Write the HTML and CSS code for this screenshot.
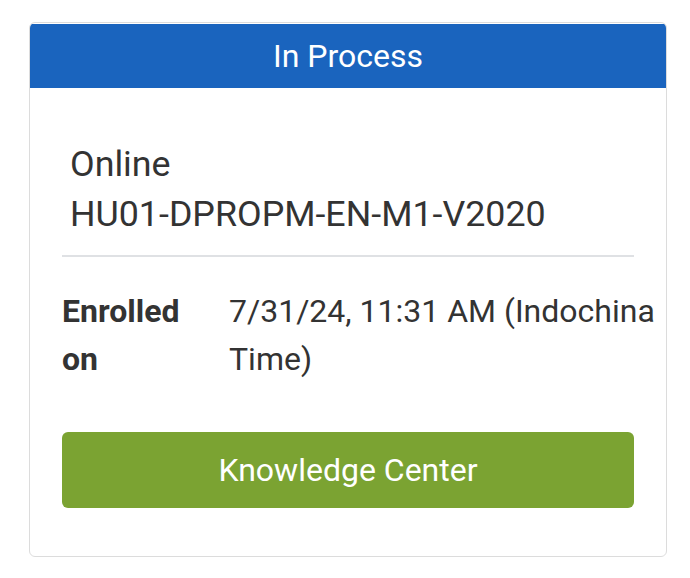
FILE: index.html
```html
<!DOCTYPE html>
<html lang="en">
<head>
<meta charset="utf-8">
<link rel="stylesheet" href="styles.css">
<title>In Process</title>
</head>
<body>
<div class="card">
  <div class="card-header">In Process</div>
  <div class="card-body">
    <div class="course-name">Online<br>HU01-DPROPM-EN-M1-V2020</div>
    <div class="divider"></div>
    <div class="details">
      <div class="label">Enrolled on</div>
      <div class="value">7/31/24, 11:31 AM (Indochina Time)</div>
    </div>
    <a class="btn" href="#">Knowledge Center</a>
  </div>
</div>
</body>
</html>
```

FILE: styles.css
```css
html, body {
  margin: 0;
  padding: 0;
  background: #ffffff;
}
body {
  padding: 22px 0 0 29px;
  font-family: Roboto, "Liberation Sans", Arial, sans-serif;
  color: #333333;
}
.card {
  width: 636px;
  height: 533px;
  border: 1px solid #dcdcdc;
  border-radius: 6px;
  box-sizing: content-box;
  overflow: hidden;
  display: flex;
  flex-direction: column;
}
.card-header {
  margin-top: 1px;
  height: 64px;
  background: #1a64be;
  color: #ffffff;
  font-size: 32px;
  display: flex;
  align-items: center;
  justify-content: center;
}
.card-body {
  padding: 0 32px;
  display: flex;
  flex-direction: column;
}
.course-name {
  margin-top: 51px;
  padding-left: 8px;
  font-size: 35.8px;
  line-height: 50px;
}
.divider {
  margin-top: 16px;
  height: 2px;
  background: #dfe1e4;
}
.details {
  margin-top: 30px;
  margin-right: -30px;
  display: grid;
  grid-template-columns: 167px 1fr;
  font-size: 32px;
  line-height: 48px;
}
.label {
  font-weight: 700;
  padding-right: 20px;
}
.btn {
  margin-top: 49px;
  height: 76px;
  border-radius: 6px;
  background: #7ba332;
  color: #ffffff;
  text-decoration: none;
  font-size: 32px;
  display: flex;
  align-items: center;
  justify-content: center;
}
```
